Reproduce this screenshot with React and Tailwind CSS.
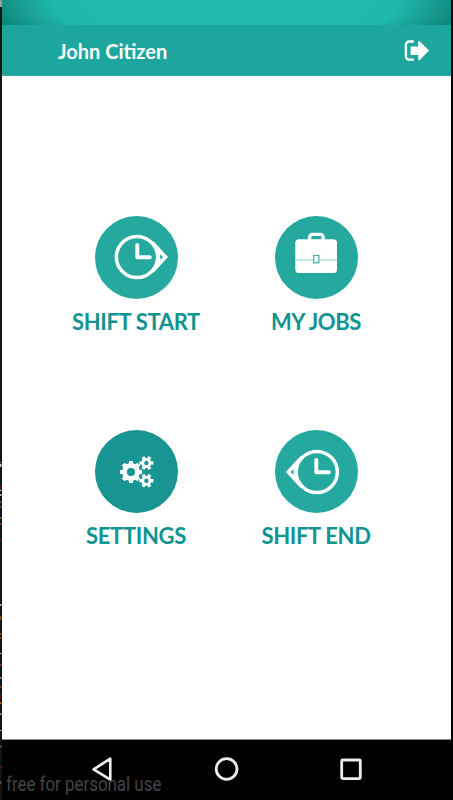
import React from 'react';

const cog = (cx, cy, teeth, outer, inner, turn = 0) => {
  const step = (Math.PI * 2) / teeth;
  const points = [];
  for (let i = 0; i < teeth; i++) {
    const a = i * step + turn;
    [[-0.3, inner], [-0.23, outer], [0.23, outer], [0.3, inner]].forEach(([o, r]) => {
      points.push(`${(cx + r * Math.cos(a + o * step)).toFixed(2)} ${(cy + r * Math.sin(a + o * step)).toFixed(2)}`);
    });
  }
  return `M${points.join('L')}Z`;
};

const hole = (cx, cy, r) => `M${cx - r} ${cy}a${r} ${r} 0 1 0 ${r * 2} 0a${r} ${r} 0 1 0 ${-r * 2} 0Z`;

const ShiftStartIcon = () => (
  <svg viewBox="0 0 83 83" className="w-full h-full" fill="none" stroke="#fff">
    <path d="M58.3 25L73 41 58.3 57z" fill="#fff" stroke="none" />
    <circle cx="42" cy="41" r="20.6" fill="#25a89e" strokeWidth="3.5" />
    <path d="M42.3 29v12.2h12.6" strokeWidth="3.9" strokeLinecap="round" strokeLinejoin="round" />
    <path d="M65.2 38.5v5l3-2.5z" fill="#25a89e" stroke="none" />
  </svg>
);

const ShiftEndIcon = () => (
  <svg viewBox="0 0 83 83" className="w-full h-full" fill="none" stroke="#fff">
    <path d="M25.5 26L10.8 42l14.7 16z" fill="#fff" stroke="none" />
    <circle cx="41.8" cy="42" r="20.6" fill="#25a89e" strokeWidth="3.5" />
    <path d="M41.3 30v12.2h12.6" strokeWidth="3.9" strokeLinecap="round" strokeLinejoin="round" />
    <path d="M18.6 39.5v5l-3-2.5z" fill="#25a89e" stroke="none" />
  </svg>
);

const BriefcaseIcon = () => (
  <svg viewBox="0 0 83 83" className="w-full h-full" fill="none">
    <path d="M34.6 24v-2.6a3 3 0 0 1 3-3h7.6a3 3 0 0 1 3 3V24" stroke="#fff" strokeWidth="3.4" />
    <rect x="20.3" y="23.2" width="41.7" height="33.7" rx="3.5" fill="#fff" />
    <path d="M20.5 44h17.5M45 44h16.8" stroke="#8fd0ca" strokeWidth="1" />
    <rect x="38.7" y="39.5" width="5.2" height="7.3" stroke="#3eb0a7" strokeWidth="1.2" />
  </svg>
);

const CogsIcon = () => (
  <svg viewBox="0 0 83 83" className="w-full h-full" fill="#fff" fillRule="evenodd">
    <path d={cog(36, 42, 8, 11.3, 9) + hole(36, 42, 4.1)} />
    <path d={cog(51.4, 33, 6, 7.2, 5.1) + hole(51.4, 33, 2.2)} />
    <path d={cog(51.4, 50.7, 6, 7.2, 5.1) + hole(51.4, 50.7, 2.2)} />
  </svg>
);

const LogoutIcon = () => (
  <svg viewBox="0 0 25 22" className="w-[25px] h-[22px]" fill="none">
    <path d="M9.9 1.5H5.2a3.3 3.3 0 0 0-3.3 3.3v11.6a3.3 3.3 0 0 0 3.3 3.3h4.7" stroke="#fff" strokeWidth="2.3" />
    <path d="M6.6 6.4h7.6V1.2h1.4l9.4 9.3-9.4 9.7h-1.4V15H6.6z" fill="#fff" />
  </svg>
);

const tiles = [
  { label: 'SHIFT START', color: 'bg-[#25a89e]', Icon: ShiftStartIcon },
  { label: 'MY JOBS', color: 'bg-[#25a89e]', Icon: BriefcaseIcon },
  { label: 'SETTINGS', color: 'bg-[#189492]', Icon: CogsIcon },
  { label: 'SHIFT END', color: 'bg-[#25a89e]', Icon: ShiftEndIcon },
];

const Tile = ({ label, color, Icon }) => (
  <button className="flex flex-col items-center h-[214px] w-[180px]">
    <span className={`block w-[83px] h-[83px] rounded-full ${color}`}>
      <Icon />
    </span>
    <span className="mt-[9px] text-[22px] leading-7 font-bold tracking-[-0.35px] text-[#119490] whitespace-nowrap">{label}</span>
  </button>
);

// slivers of the desktop visible beside the device window
const specks = [
  [462, 1, '#a56b2c'], [464, 3, '#b9cbd8'], [486, 3, '#6b1712'], [490, 1, '#cfd3d6'], [494, 2, '#aeb6bb'],
  [501, 2, '#8a4a20'], [506, 2, '#7b4522'], [517, 2, '#9a5a2a'], [523, 2, '#7a3a12'], [539, 2, '#5f1d12'],
  [604, 2, '#a9c4d8'], [616, 4, '#8a4312'], [633, 2, '#9a4a16'], [637, 2, '#7a3a12'], [653, 1, '#c9d4dc'],
  [664, 2, '#8a3a12'], [677, 2, '#6c8ea0'], [686, 2, '#8a4312'], [694, 5, '#5a1010'], [702, 2, '#a8521c'],
  [713, 2, '#7d97a5'], [730, 1, '#9fb2bd'], [746, 1, '#6f8fa0'], [767, 1, '#8a1a12'], [781, 3, '#3b4a55'],
];

const App = () => {
  return (
    <div className="flex w-[453px] h-[800px] overflow-hidden bg-black font-[Lato,'Liberation_Sans',sans-serif]">
      <svg viewBox="0 0 2 800" className="w-[2px] h-full shrink-0">
        <rect width="2" height="800" fill="#111315" />
        <rect width="2" height="7" fill="#a09c9c" />
        {specks.map(([y, h, fill]) => (
          <rect key={y} y={y} width="1.5" height={h} fill={fill} />
        ))}
      </svg>

      <div className="relative flex flex-col w-[449px] h-full">
        <div className="h-[25px] shrink-0 bg-[radial-gradient(ellipse_240px_70px_at_50%_0px,#1fb9af_0%,#1eb7ac_72%,#189d92_86%,#0e8278_100%)]" />
        <header className="flex items-center justify-between h-[51px] shrink-0 pt-0.5 pl-14 pr-[22px] bg-[#1ca69d] border-b border-[#2fb3aa]">
          <h1 className="text-xl leading-6 font-bold text-white">John Citizen</h1>
          <button>
            <LogoutIcon />
          </button>
        </header>

        <main className="flex-1 bg-white pt-[140px] pl-[44px] border-b border-[#8c8c8c]">
          <div className="grid grid-cols-[180px_180px]">
            {tiles.map((tile) => (
              <Tile key={tile.label} {...tile} />
            ))}
          </div>
        </main>

        <nav className="flex justify-between h-[60px] shrink-0 pt-4 pl-[88px] pr-[87px] bg-black">
          <svg viewBox="0 0 26 26" className="w-[26px] h-[26px]" fill="none" stroke="#eee" strokeWidth="2.6">
            <path d="M20.3 2.7v21L3.6 13.3z" strokeLinejoin="round" />
          </svg>
          <svg viewBox="0 0 26 26" className="w-[26px] h-[26px]" fill="none" stroke="#eee" strokeWidth="2.8">
            <circle cx="12.6" cy="13" r="10.4" />
          </svg>
          <svg viewBox="0 0 26 26" className="w-[26px] h-[26px]" fill="none" stroke="#eee" strokeWidth="2.8">
            <rect x="3.7" y="4" width="18.6" height="18.6" rx="1" />
          </svg>
        </nav>

        <p className="absolute left-[4px] bottom-[4px] text-[20px] leading-6 font-normal text-[#444] whitespace-nowrap origin-left scale-x-[0.845] font-[Roboto,sans-serif]">
          free for personal use
        </p>
      </div>
    </div>
  );
};

export default App;
